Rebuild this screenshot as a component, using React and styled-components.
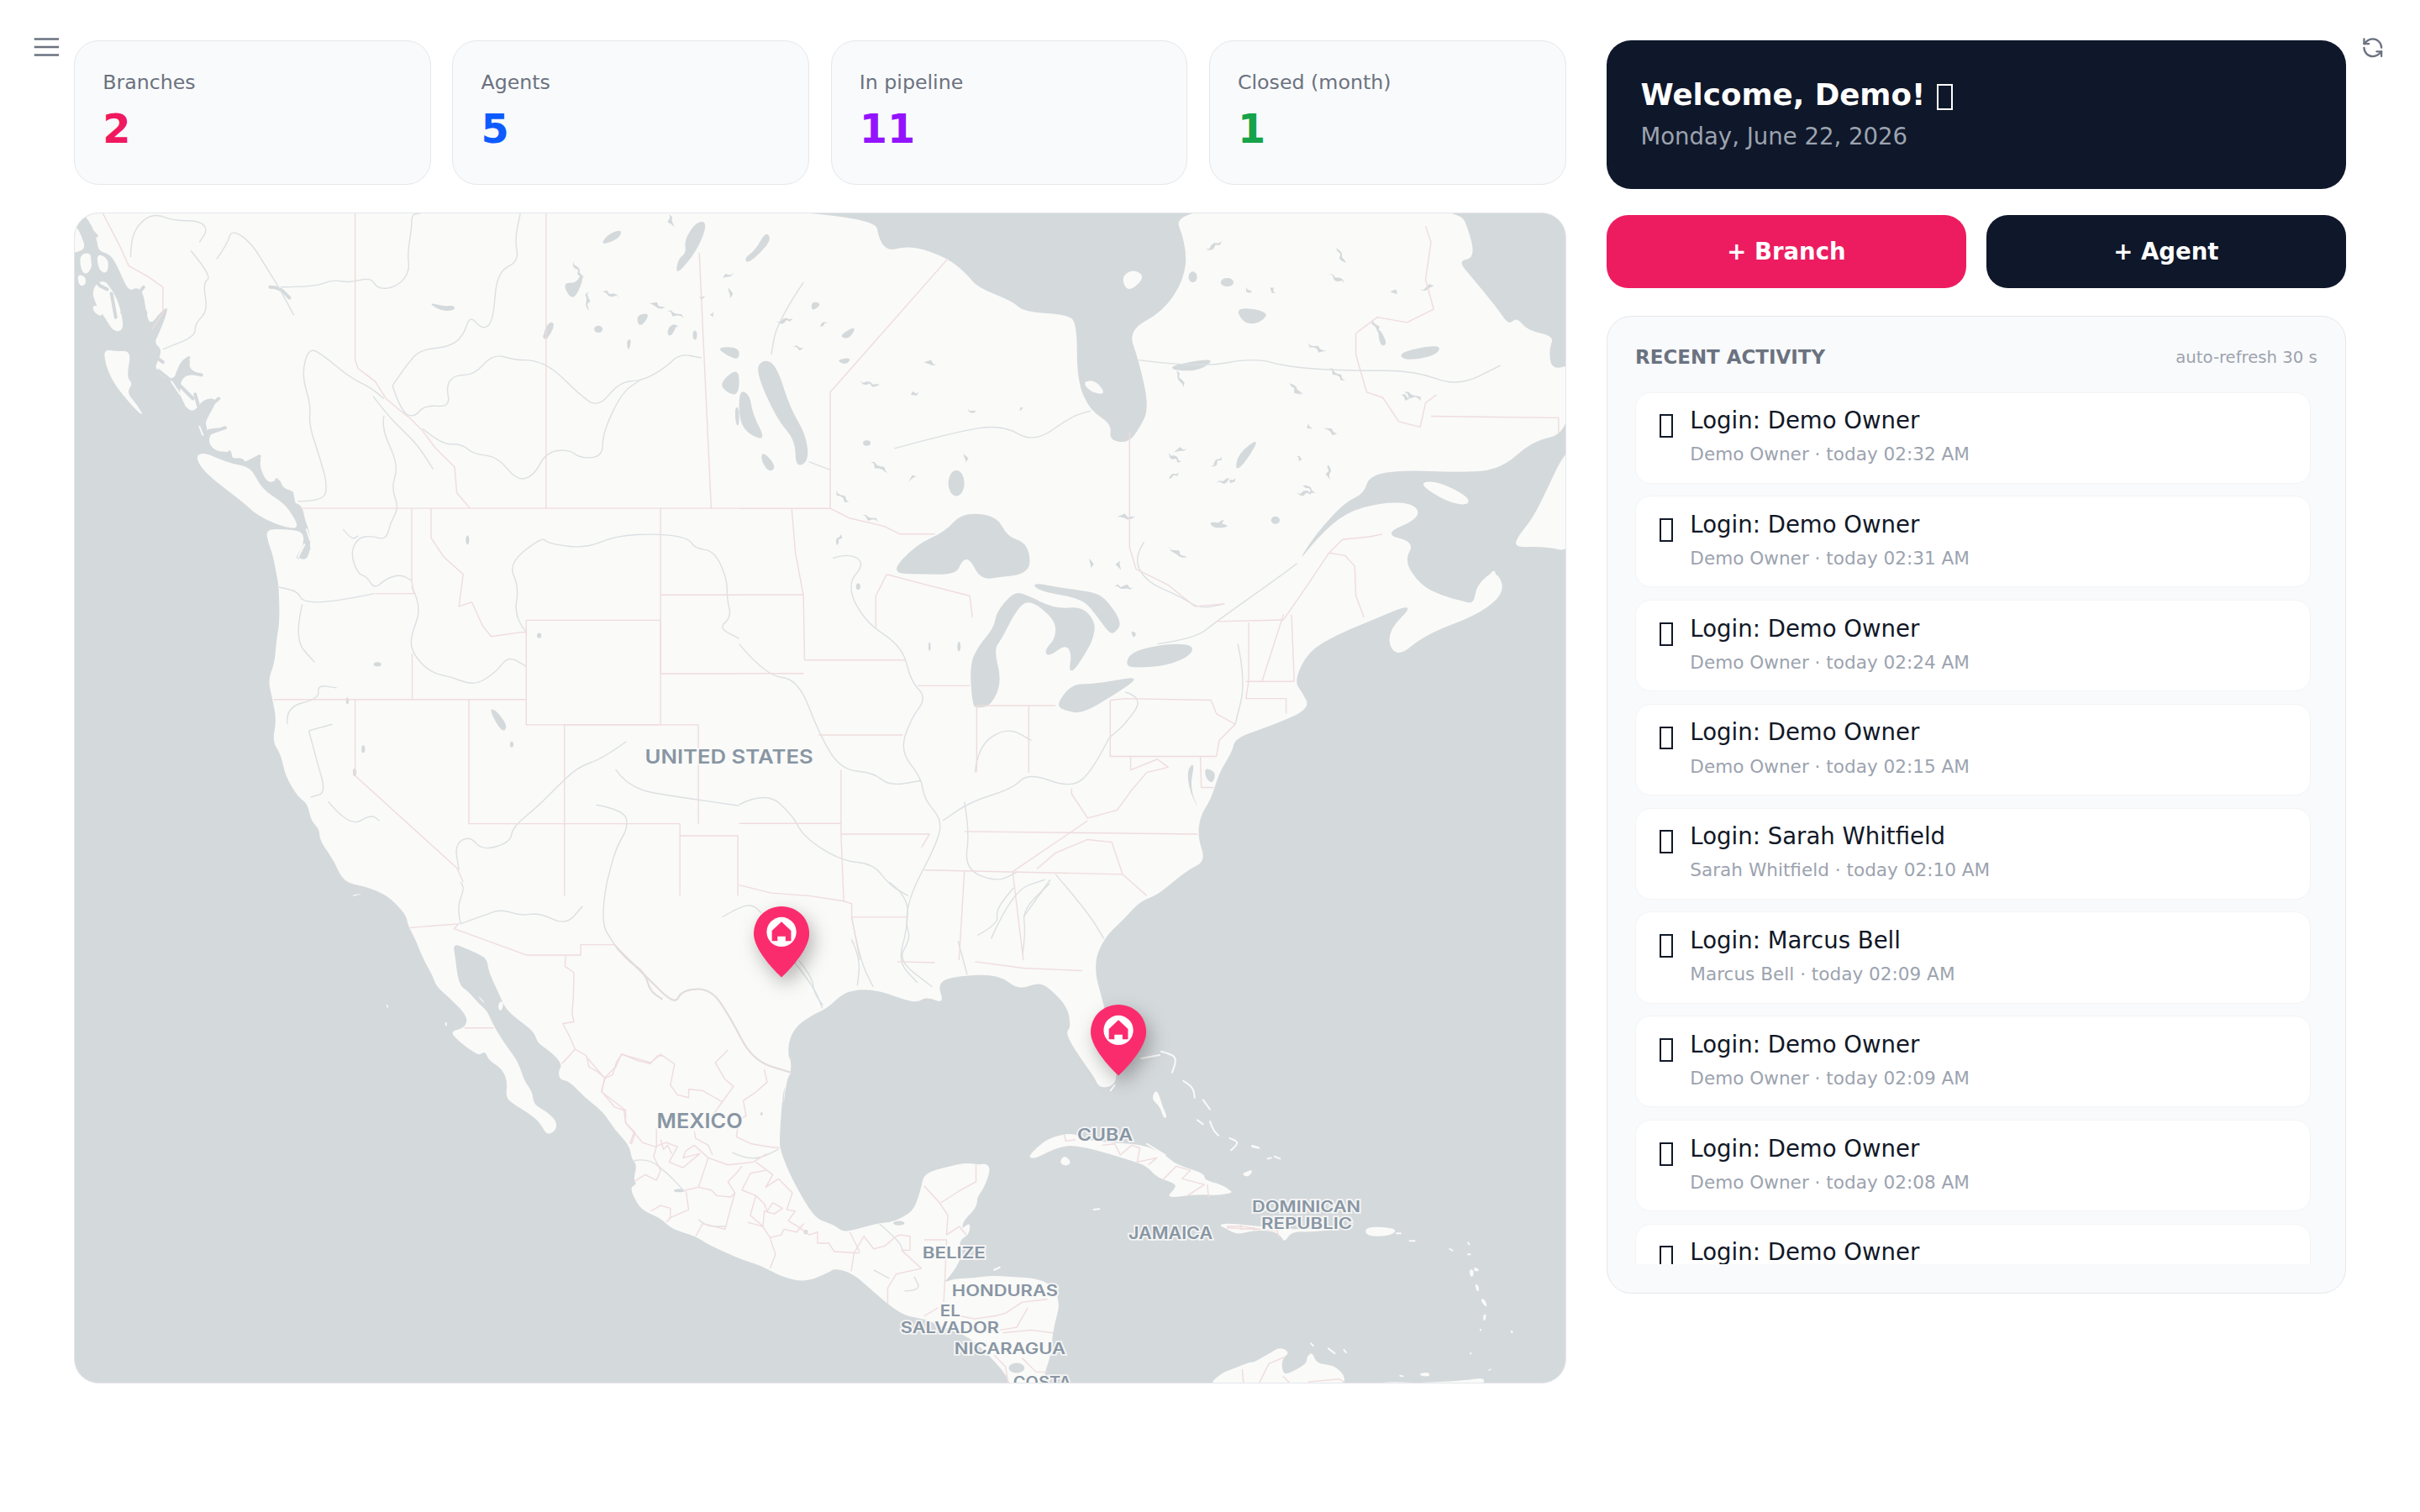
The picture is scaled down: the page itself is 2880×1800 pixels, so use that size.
import React from "react";
import styled, { createGlobalStyle } from "styled-components";
import { RefreshCcw } from "lucide-react";

const seg = (ox, oy, sx, sy) => (s) =>
  s.trim().split(/\s+/).map((p) => {
    const [x, y] = p.split(",").map(Number);
    return [ox + x / sx, oy + y / sy];
  });
const z7 = seg(80, 250, 1.96, 1.96);
const z8 = seg(880, 250, 1.568, 1.568);
const z9 = seg(89, 1050, 2.24, 2.613);
const z10 = seg(700, 1250, 3, 3);
const z11 = seg(1100, 1250, 3, 3);
const z12 = seg(1460, 1250, 3, 3);
const z3 = seg(860, 1050, 2.8, 3);
const pts = (a) => a.map((p) => p[0].toFixed(1) + "," + p[1].toFixed(1)).join(" ");
const f = (n) => n.toFixed(1);
const smoothClosed = (a) => {
  const n = a.length;
  const mid = (p, q) => [(p[0] + q[0]) / 2, (p[1] + q[1]) / 2];
  const s = mid(a[n - 1], a[0]);
  let d = `M${f(s[0])} ${f(s[1])}`;
  for (let i = 0; i < n; i++) {
    const m = mid(a[i], a[(i + 1) % n]);
    d += `Q${f(a[i][0])} ${f(a[i][1])} ${f(m[0])} ${f(m[1])}`;
  }
  return d + "Z";
};
const smoothOpen = (a) => {
  if (a.length < 3) return `M${f(a[0][0])} ${f(a[0][1])}L${f(a[a.length - 1][0])} ${f(a[a.length - 1][1])}`;
  let d = `M${f(a[0][0])} ${f(a[0][1])}`;
  for (let i = 1; i < a.length - 1; i++) {
    const mx = (a[i][0] + a[i + 1][0]) / 2;
    const my = (a[i][1] + a[i + 1][1]) / 2;
    d += `Q${f(a[i][0])} ${f(a[i][1])} ${f(mx)} ${f(my)}`;
  }
  const l = a[a.length - 1];
  return d + `L${f(l[0])} ${f(l[1])}`;
};
// A short stretch of small lakes: a jagged sliver between the two points.
const jag = (a, k) => {
  const [p, q] = [a[0], a[a.length - 1]];
  const dx = q[0] - p[0];
  const dy = q[1] - p[1];
  const len = Math.hypot(dx, dy) || 1;
  const nx = -dy / len;
  const ny = dx / len;
  const steps = Math.max(3, Math.round(len / 4));
  const top = [];
  const bottom = [];
  for (let i = 0; i <= steps; i++) {
    const t = i / steps;
    const h = Math.sin(t * Math.PI) * (1.2 + ((i * 7 + k * 3) % 5) * 0.55);
    const w = ((i * 5 + k) % 3) - 1;
    const x = p[0] + dx * t + nx * w * 1.4;
    const y = p[1] + dy * t + ny * w * 1.4;
    top.push([x + nx * h, y + ny * h]);
    bottom.unshift([x - nx * h * 0.6, y - ny * h * 0.6]);
  }
  return [...top, ...bottom];
};

const LAND = smoothClosed([
  ...z7(`10,-10 40,8 62,40 72,75 75,95 105,105 125,145 145,190 165,180 180,195 185,235 195,270 222,235 240,225 215,290 205,310 222,325 215,350 205,370 235,398 260,385 265,355 290,345 285,370 315,385 270,385 262,430 280,465 300,470 320,440 355,440 325,490 320,520 330,510 365,508 340,515 330,540 345,562 385,565 385,580 410,578 420,592 455,572 450,600 470,640 497,625 505,650 530,655 525,680 550,690 555,720 570,760 565,815 540,815 550,790 555,750 510,745 465,745 470,775 480,800 490,850 495,880 497,960 490,1000 485,1060 470,1095 480,1140 490,1190 480,1240 500,1270 510,1320 540,1370 562,1385 570,1425 590,1445 590,1470 625,1520 645,1568`),
  ...z9(`780,15 830,40 860,70 885,105 890,135 910,180 920,210 935,250 955,290 965,325 1005,365 1050,420 1040,455 1000,465 1030,500 1060,525 1080,540 1095,525 1105,555 1140,580 1155,620 1150,670 1170,690 1205,715 1240,745 1260,790 1285,770 1285,745 1265,720 1245,705 1225,690 1220,650 1200,620 1185,565 1165,530 1140,490 1115,440 1100,400 1080,380 1050,340 1025,320 1015,230 1010,190 1050,210 1080,225 1100,240 1105,280 1135,355 1150,395 1185,430 1225,465 1235,500 1260,520 1285,545 1300,570 1290,590 1295,615 1320,620 1360,670 1410,715 1440,770 1480,820 1485,860 1500,880 1490,925 1500,940 1480,950 1500,1000 1520,1025`),
  ...z10(`260,600 300,640 385,665 430,695 550,750 620,770 690,810 775,830 860,795 880,780 940,795 1000,845 1060,900 1130,950 1200,960`),
  ...z11(`60,985 150,1020 200,1060 250,1110 300,1170 320,1240 420,1240 430,1150 450,1100 460,1000 480,925 480,900 470,860 440,830 390,815 310,810 240,805 170,815 130,815 100,820 70,830 90,810 125,760 130,730 125,680 160,660 165,620 150,625 135,640 140,610 180,570 190,545 190,525 215,490 237,430 225,405 195,410 150,402 90,415 0,440`),
  ...z10(`1190,490 1165,570 1120,600 1080,615 1030,620 960,640 910,650 880,625 820,605 785,560 745,490 710,420 685,350 685,310 690,220 700,130 730,70 715,0`),
  ...z3(`200,830 215,700 232,680 215,590 240,520 300,475 350,450 400,400 445,385 500,385 555,400 605,420 650,430 680,410 740,435 715,360 780,335 920,330 985,385 1050,360 1085,375 1150,445 1160,520 1145,535 1160,575 1200,640 1240,700 1255,735 1300,730 1315,695 1300,560 1270,440 1235,300 1270,200 1340,130 1390,70 1450,45 1500,0`),
  ...z8(`840,1230 870,1215 855,1170 860,1130 880,1100 895,1050 920,1010 925,985 1000,960 1065,930 1050,900 1035,880 1060,825 1110,795 1170,770 1265,730 1205,790 1225,838 1280,792 1380,755 1430,712 1410,670 1375,700 1370,735 1350,730 1310,720 1270,700 1240,655 1260,620 1200,605 1270,575 1260,548 1200,545 1130,565 1080,610 1040,660 1075,605 1130,545 1165,530 1175,495 1240,485 1340,490 1420,485 1480,430 1545,418 1560,285 1515,300 1510,260 1520,235 1470,225 1450,200 1435,215 1415,185 1370,130 1340,95 1370,90 1365,50 1340,-10 805,-10 835,70 830,130 790,190 725,225 745,280 765,370 745,410 725,435 690,430 695,400 655,375 630,320 630,210 610,195 530,190 510,170 445,145 425,120 390,90 320,65 265,80 250,-10`),
]);

const LAND_BITS = [
  z7(`0,20 25,40 35,60 45,90 20,100 0,100`),
  z7(`88,325 115,330 152,328 140,390 155,405 140,425 165,455 180,480 165,470 130,430 105,395 90,355`),
  z7(`30,105 55,98 62,125 50,150 35,145`),
  z7(`70,100 100,115 95,150 75,140`),
  z7(`58,185 85,160 110,190 125,225 135,280 110,285 90,250 70,225`),
  z7(`25,150 45,155 45,175 30,178`),
  z7(`60,222 80,225 85,250 65,240`),
  z7(`300,575 320,566 350,578 385,592 430,600 455,650 500,680 520,700 545,745 500,738 445,712 415,685 370,650 320,610`),
  z8(`640,320 665,318 685,345 655,340`),
  z8(`712,125 735,110 758,125 725,155`),
  z8(`1265,510 1300,505 1360,535 1360,552 1320,545`),
  z8(`1447,630 1450,612 1480,575 1505,525 1535,460 1560,440 1560,640 1500,628`),
  z8(`1370,735 1385,700 1410,665 1412,700 1395,725`),
  z8(`1000,958 930,985 925,975 990,950`),
  z11(`370,382 405,345 450,312 530,295 570,320 650,330 740,335 800,345 860,375 900,410 1000,440 1000,465 1060,480 1100,505 1060,520 970,515 860,530 900,490 890,475 830,455 795,415 740,395 640,365 560,345 500,340 430,370 395,388`),
  z11(`490,385 505,378 525,400 510,415 485,405`),
  z11(`810,175 830,135 850,200 868,240 855,245 840,200`),
  z11(`1135,440 1175,425 1160,452 1140,450`),
  z11(`1010,1200 1060,1155 1095,1140 1200,1100 1200,1200`),
  z12(`-30,625 0,618 120,630 200,640 400,640 300,650 230,648 205,690 185,650 100,642 40,660 0,640`),
  z12(`-30,505 10,498 20,510 -10,515`),
  z12(`495,630 590,635 605,648 575,665 495,665`),
  z12(`0,1200 0,1165 60,1135 150,1085 190,1060 225,1080 195,1105 200,1160 230,1150 285,1120 285,1095 305,1078 320,1120 380,1125 420,1160 420,1200`),
  z12(`870,1075 875,1085 865,1090`),
  z12(`685,1155 720,1150 725,1165 695,1165`),
  z12(`500,1200 570,1183 690,1190 860,1178 920,1170 915,1200`),
  z12(`930,1142 950,1136 935,1146`),
  z12(`1010,998 1024,1008 1015,1014`),
  z12(`865,782 880,785 880,808 868,810`),
  z12(`882,772 905,788 882,792`),
  z12(`885,835 898,840 900,862 890,860`),
  z12(`905,888 920,890 930,918 915,912`),
  z12(`915,945 926,942 922,968 914,965`),
  z12(`900,996 910,996 906,1008`),
  z9(`950,75 972,90 965,100`),
  z9(`830,378 838,385 836,395`),
  z9(`988,432 996,440 990,452`),
  z9(`740,40 772,35 745,45`),
  z9(`1075,350 1098,380 1085,370`),
  z9(`1132,372 1145,372 1140,400 1130,398`),
];

const BAHAMA = [
  z11(`925,110 960,130 965,170`),
  z11(`995,178 1020,212`),
  z11(`975,250 995,265`),
  z11(`1020,255 1030,285 1050,305`),
  z11(`1090,315 1118,325 1115,340 1095,358`),
  z11(`1170,345 1195,350`),
  z11(`775,30 800,25 840,18`),
  z11(`845,5 885,15 900,35 885,80`),
  z11(`665,145 680,125`),
  z11(`605,570 625,568`),
  z11(`795,335 860,375`),
  z11(`250,785 270,776`),
  z12(`145,388 158,385`),
  z12(`170,380 190,388`),
  z12(`90,342 112,348`),
  z12(`605,655 620,655`),
  z12(`652,682 670,682`),
  z12(`795,710 805,716`),
  z12(`860,688 865,694`),
  z12(`860,730 868,730`),
  z12(`300,1048 308,1056`),
  z12(`362,1066 385,1083`),
  z12(`418,1070 425,1080`),
  z12(`618,1163 628,1165`),
];

const LAKES = [
  z8(`280,678 330,625 385,600 415,565 480,570 500,610 535,620 545,660 530,680 490,685 450,690 430,650 415,655 405,680 340,680`),
  z8(`435,925 430,850 445,815 475,780 480,750 510,715 530,715 590,745 640,740 665,770 660,800 650,820 625,860 615,860 620,830 610,810 575,835 570,820 590,800 590,765 540,725 515,750 490,800 475,820 490,880 470,925 445,930`),
  z8(`545,695 600,705 650,712 680,720 715,770 700,790 690,790 665,755 640,725 560,712`),
  z8(`590,925 620,885 655,885 690,880 750,870 700,905 640,940 610,935`),
  z8(`720,850 730,825 790,810 845,810 845,830 800,850 740,855`),
  z8(`30,300 45,278 70,290 95,370 125,420 130,470 105,480 105,430 70,390`),
  z8(`45,450 70,480 55,490 40,465`),
  z8(`0,335 20,345 25,380 50,430 20,420 0,395`),
  z8(`868,1040 890,1050 882,1072 870,1060`),
  z8(`835,1045 850,1030 840,1080 860,1125 840,1085`),
  z8(`730,785 742,790 735,800`),
  z8(`10,90 30,75 50,40 60,55 40,80 15,100`),
  z8(`135,170 155,175 135,190`),
  z8(`180,280 210,275 200,290`),
  z8(`185,235 220,215 205,242`),
  z8(`925,180 990,190 970,212 940,212`),
  z8(`805,290 890,275 860,300 810,300`),
  z8(`930,455 972,423 945,470 925,488`),
  z8(`1230,265 1310,250 1300,272 1240,282`),
  z8(`1190,215 1210,250 1195,255`),
  z8(`875,580 920,590 885,595`),
  z8(`1340,640 1370,630 1355,650`),
  z7(`1248,75 1265,55 1295,45 1290,65 1255,80`),
  z7(`1440,70 1470,25 1495,30 1470,95 1420,155 1425,115 1445,100`),
  z7(`1155,170 1190,170 1200,145 1205,165 1180,215`),
  z7(`1330,245 1360,240 1345,268 1332,268`),
  z7(`843,215 880,225 905,222 905,235 870,235`),
  z7(`985,1165 1000,1165 1030,1205 1015,1220`),
  z7(`1110,290 1125,260 1140,265 1122,302`),
  z7(`1405,270 1425,265 1410,295 1400,290`),
  z7(`1305,305 1318,300 1310,332`),
  z7(`1515,320 1568,320 1568,350 1540,340`),
  z7(`1520,405 1568,365 1568,430 1545,430`),
  z7(`1558,460 1568,460 1568,505 1560,500`),
  z10(`305,498 345,495 345,508 310,508`),
];

const LAKE_DOTS = [
  [z8, 405, 510, 15, 24],
  [z8, 1000, 579, 8, 7],
  [z8, 910, 135, 12, 8],
  [z8, 222, 703, 4, 6],
  [z8, 410, 815, 3, 9],
  [z8, 355, 815, 2, 8],
  [z8, 238, 435, 7, 5],
  [z8, 846, 125, 8, 10],
  [z7, 935, 770, 4, 11],
  [z7, 725, 1060, 9, 5],
  [z7, 655, 1145, 3, 8],
  [z7, 692, 1258, 4, 9],
  [z7, 672, 1312, 4, 9],
  [z7, 1038, 1247, 4, 7],
  [z7, 1117, 295, 6, 6],
  [z7, 1240, 278, 10, 8],
  [z7, 1465, 292, 5, 11],
  [z7, 1102, 993, 5, 6],
  [z10, 620, 228, 4, 6],
  [z10, 778, 650, 7, 8],
  [z10, 1110, 618, 20, 8],
  [z11, 330, 1135, 28, 18],
];

const THIN_WATER = [
  z8(`870,75 900,58`), z8(`1100,120 1130,135`), z8(`1115,70 1130,100`), z8(`945,145 955,155`), z8(`990,145 1000,155`),
  z8(`1215,150 1228,155`), z8(`1270,150 1295,140`), z8(`815,300 830,330`), z8(`810,450 835,445`), z8(`1035,330 1050,345`),
  z8(`1235,345 1250,352`), z8(`1260,345 1272,355`), z8(`1060,400 1068,410`), z8(`1040,460 1050,465`), z8(`1100,475 1100,505`),
  z8(`1040,530 1070,525`), z8(`880,590 905,580`), z8(`800,500 820,490`), z8(`880,480 900,460`), z8(`915,510 925,500`),
  z8(`705,570 738,575`), z8(`800,630 835,650`), z8(`700,702 735,705`), z8(`655,650 658,668`), z8(`708,655 710,672`),
  z8(`245,470 280,490`), z8(`315,505 330,495`), z8(`180,525 205,545`), z8(`230,570 260,580`), z8(`180,625 190,605`),
  z8(`70,210 100,202`), z8(`100,255 120,258`), z8(`150,215 165,210`), z8(`225,320 262,328`), z8(`320,345 335,340`),
  z8(`345,282 368,288`), z8(`425,372 442,378`), z8(`525,368 527,375`), z8(`420,455 425,470`),
  z8(`1180,205 1200,235`), z8(`1240,340 1265,350`), z8(`1090,405 1115,418`), z8(`1060,250 1095,265`),
  z8(`1100,295 1130,318`), z8(`1028,322 1048,348`), z8(`800,455 825,470`), z8(`890,510 915,502`), z8(`1052,512 1075,528`),
  z7(`1180,120 1205,160`), z7(`1250,190 1290,203`), z7(`1360,215 1395,230`), z7(`1400,285 1425,268`), z7(`1530,158 1555,147`),
  z7(`1545,180 1550,205`), z7(`1215,190 1215,235`), z7(`1405,10 1415,40`), z7(`1490,203 1475,205`), z7(`1500,245 1510,240`),
  z7(`1400,235 1440,250`),
];
const FJORDS = [
  z7(`35,15 55,45 70,60`), z7(`60,100 65,170 95,185`), z7(`110,130 125,165 140,215`), z7(`150,235 160,205 180,180`),
  z7(`165,240 185,265`), z7(`130,180 150,200 130,240`), z7(`105,195 115,250`), z7(`185,240 170,215`),
  z7(`255,395 265,360 285,345`), z7(`290,380 315,385`), z7(`265,410 295,440`), z7(`255,420 272,455`), z7(`300,430 310,465`),
  z7(`320,470 355,440`), z7(`320,490 325,520`), z7(`335,520 370,508`), z7(`380,565 385,585`), z7(`420,590 450,575`),
  z7(`490,630 500,660`), z7(`525,660 530,685`), z7(`545,710 555,745`), z7(`555,740 565,790`), z7(`540,810 565,770`),
  z7(`475,180 495,180 520,205`), z7(`205,340 225,355`), z7(`215,375 240,395`),
];
const WHITE_SLIVERS = [
  z7(`560,745 568,770`), z7(`540,810 555,780`), z7(`245,400 265,430`), z7(`310,505 318,525`),
];

const BORDERS = [
  z7(`545,696 1568,696`),
  z8(`0,557 170,557`),
  z7(`673,8 673,350 680,370 700,385 720,400 745,440 780,470 800,485 830,515 860,555 880,575 905,600 910,660 940,695`),
  z7(`1118,8 1118,696`),
  z7(`1475,100 1503,696`),
  z7(`805,696 805,865 810,895 720,895`),
  z7(`806,1035 806,1142`),
  z7(`483,1142 1072,1142`),
  z7(`850,696 850,765 880,810 925,850 915,925 945,915 970,970 990,995 1060,985 1072,985`),
  z7(`1072,957 1385,957 1385,1201 1072,1201 1072,957`),
  z7(`1385,696 1385,1082 1568,1082`),
  z7(`1385,898 1568,898`),
  z7(`673,1142 673,1320 910,1535 925,1568`),
  z7(`938,1142 938,1432 1430,1432`),
  z7(`1161,1201 1161,1600`),
  z7(`1161,1201 1473,1201 1473,1432`),
  z7(`1430,1432 1430,1600`),
  z7(`1430,1460 1565,1460 1565,1600`),
  z8(`0,718 120,718`),
  z8(`98,557 105,640 120,720 122,840 310,840`),
  z8(`0,865 120,865`),
  z8(`148,980 305,980`),
  z8(`0,1145 190,1145`),
  z8(`190,1045 190,1165 195,1290 210,1295 210,1320 315,1320`),
  z8(`190,1165 355,1165 340,1190`),
  z8(`0,1260 60,1275 130,1280 195,1290`),
  z8(`210,1320 225,1400`),
  z8(`275,680 350,700 430,720 435,760`),
  z8(`275,680 255,720 255,780`),
  z8(`333,888 430,888`),
  z8(`443,925 443,1050`),
  z8(`443,925 590,925`),
  z8(`540,925 540,1050`),
  z8(`692,915 692,1020 890,1020`),
  z8(`692,915 720,912 880,915 890,940 925,960 895,990 890,1020`),
  z8(`730,1020 730,1045 780,1025 800,1040 760,1050 730,1085 705,1120 650,1135 620,1090 620,1080`),
  z8(`860,1020 862,1078 885,1078`),
  z8(`420,1160 855,1165`),
  z8(`345,1232 715,1240 760,1280`),
  z8(`420,1235 410,1400`),
  z8(`510,1235 530,1400`),
  z8(`440,1403 530,1415 640,1420`),
  z8(`295,1403 365,1405`),
  z8(`555,1230 590,1200 650,1175 695,1180 715,1240`),
  z8(`510,1235 650,1140`),
  z8(`950,770 950,880 945,912`),
  z8(`1015,755 975,880`),
  z8(`1030,755 1035,880`),
  z8(`945,880 1035,880`),
  z8(`945,912 1020,912 1020,940`),
  z8(`890,768 1015,765 1060,700 1100,640 1130,645 1148,665 1150,720 1165,760`),
  z8(`728,415 728,630 740,670 800,700 850,740 905,735`),
  z8(`170,340 170,557 205,575 270,590 300,605 365,605`),
  z8(`390,90 170,340`),
  z8(`1290,385 1528,388 1528,418`),
  z8(`1280,30 1290,60 1280,130 1295,185 1245,210 1190,200 1150,230 1150,270 1170,340 1200,350 1230,395 1270,405 1280,360 1300,345`),
  z8(`1100,640 1125,615 1175,610 1200,605`),
  z7(`85,8 125,85 145,130 190,155 225,180 225,240 200,278`),
  z9(`895,142 1025,130 1013,145 1205,227 1350,227 1350,195 1440,195`),
  z9(`1040,454 1118,454`),
  z9(`1310,228 1308,262 1332,282 1330,360 1327,410 1332,435 1302,440 1320,480 1335,520 1300,565`),
  z9(`1335,520 1365,540 1372,575 1395,590 1415,610 1405,650 1440,700 1465,710 1470,750 1495,780 1485,815`),
  z9(`1415,610 1435,600 1445,560 1460,535 1500,555 1535,565 1555,540 1568,540`),
  z10(`0,30 60,100 100,60 120,15 225,45 260,15 310,50 295,125 320,160 360,170 360,140 410,145 480,185 520,130 490,105 455,45 500,0`),
  z10(`60,100 50,150 135,215 135,260 165,295 150,335`),
  z10(`165,295 195,330 240,345 280,330 320,345 290,400 340,420 400,370 340,385 350,360 380,340 430,385 500,410 550,405 590,400 640,370`),
  z10(`480,185 440,240`),
  z10(`245,280 245,345 235,380 260,430 245,465 205,445 165,470`),
  z10(`260,320 270,355 285,340 300,370`),
  z10(`380,290 385,315 430,340 445,375`),
  z10(`430,385 395,490 440,500 460,520 510,525 525,510 500,470 530,440 550,415`),
  z10(`555,180 565,235 540,250 530,310 585,335 640,345 685,350`),
  z10(`555,180 600,150 640,115 630,70`),
  z10(`525,510 500,600 490,640 410,620 385,665`),
  z10(`395,490 350,500 360,570 290,600`),
  z10(`225,575 260,555 295,565 295,600 280,615`),
  z10(`600,400 640,430 660,445 635,490 680,460 730,510 710,570 740,575 715,610 750,630 790,660 820,650 820,690 860,690 880,720 970,725`),
  z10(`550,500 580,440 635,430`),
  z10(`550,500 600,520 630,550 640,575 660,545 695,565 665,585 630,575 625,630 570,615`),
  z10(`600,520 580,590 625,630 650,670 690,660 700,640 745,650 770,620`),
  z10(`650,670 670,730 650,780`),
  z10(`940,790 950,725 985,665 1020,710 1060,700 1100,665 1115,660 1150,665 1150,715 1120,715 1190,780 1100,800 1070,850 1070,910`),
  z10(`970,720 935,650`),
  z11(`0,485 55,545 85,590 80,660 125,630 150,660`),
  z11(`60,545 130,500 185,470 185,410`),
  z11(`0,678 80,678 75,800 70,900`),
  z11(`0,950 50,920`),
  z11(`130,950 180,960 250,950 290,940 350,900 440,890`),
  z11(`270,1000 330,990 370,920`),
  z11(`280,1010 380,1000 460,1010`),
  z11(`250,1090 290,1130 300,1190`),
  z11(`350,1100 400,1150 440,1150`),
  z11(`500,300 505,325 540,320`),
  z11(`635,340 680,335 700,375 740,340 770,350 760,400 830,385 800,410`),
  z11(`850,465 900,415 950,430 920,460 1000,480 940,520`),
  z11(`1010,480 1015,525`),
  z11(`1080,630 1140,630 1200,640`),
  z12(`0,635 100,640 180,645 185,670`),
  z12(`50,625 50,640 95,635 100,650`),
  z12(`55,1140 60,1200`),
  z12(`110,1200 150,1120 210,1095`),
  z12(`200,1165 235,1200`),
  z12(`290,1185 400,1175 420,1185`),
];

const RIVERS = [
  z7(`150,110 150,70 170,30 205,8 250,25 310,25 330,45 310,75`),
  z7(`290,95 340,155 318,170 330,235 300,265 300,295 225,325`),
  z7(`350,115 375,80 385,45 430,75 470,140 495,180 530,245`),
  z7(`500,180 580,180 620,162 660,170 710,157 725,185 770,180 800,145 795,100 805,40 805,10 825,8`),
  z7(`715,435 750,480 780,510 820,550 855,605`),
  z7(`540,680 600,680 608,640 590,575 565,500 570,455 548,385 565,320 600,340 660,390 710,415 740,440`),
  z7(`740,480 735,510 765,575 770,610 758,650 775,695 755,730 745,770 710,760 680,765 662,800 680,850 700,855 718,885 745,860 780,850 805,865`),
  z7(`718,895 620,915 550,915 540,890 495,880`),
  z7(`760,410 800,350 830,325 890,320 925,295 940,245 970,280 995,260 1003,145 1055,120 1045,70 1058,8`),
  z7(`760,410 780,470 810,485 835,455 895,460 885,410 905,385 950,385 995,335 1045,350 1090,350 1135,370 1195,430 1240,462 1290,400 1345,398 1400,365 1430,335 1480,345`),
  z7(`830,510 875,548 920,545 950,570 1005,575 1050,632 1090,620 1118,565 1170,558 1200,580 1250,575 1250,520 1295,425 1340,395`),
  z7(`1072,985 1043,950 1055,880 1030,825 1110,762 1120,778 1210,790 1280,760 1380,755 1450,765 1465,790 1510,795 1540,860 1540,910 1550,950 1520,975 1568,1000`),
  z7(`805,880 830,925 800,1000 810,1040 850,1080 900,1090 950,1110 1000,1080 1030,1040 1072,1065`),
  z7(`550,920 530,1000 578,1055`),
  z7(`645,745 665,770 680,760`),
  z7(`565,1215 585,1290 605,1360 570,1370`),
  z7(`515,1200 510,1160 590,1140 585,1108 630,1115`),
  z7(`620,1200 565,1215`),
  z7(`610,1380 660,1440 710,1410 730,1425`),
  z7(`1305,1240 1250,1280 1190,1300 1130,1360 1095,1395 1040,1440 1035,1475 970,1495 940,1460 905,1480 915,1540`),
  z7(`1280,1305 1310,1350 1430,1370 1568,1390`),
  z7(`1235,1388 1300,1400 1310,1440 1280,1490 1260,1568`),
  z8(`0,810 50,870 110,875 150,980 190,1045 250,1050 280,1075 340,1065`),
  z8(`0,1110 50,1085 100,1130 120,1170 190,1215 250,1220 280,1260 315,1280`),
  z8(`175,650 205,640 235,660 200,700 235,770 305,815 320,880 350,910 320,950 300,1010 340,1060 345,1100 380,1140 365,1190 320,1275 310,1330 320,1360 295,1400 360,1450`),
  z8(`690,985 660,1045 620,1080 540,1050 510,1080 430,1105 380,1140`),
  z8(`420,1105 430,1160 420,1230 480,1255 520,1235`),
  z8(`440,1050 445,1000 500,965 545,990`),
  z8(`780,810 850,800 890,768 1000,690 1040,660`),
  z8(`745,280 860,295 960,275 1030,295 1150,300 1260,300 1340,330 1420,290`),
  z8(`755,620 735,650 760,695 820,720 860,745 905,735`),
  z8(`290,445 400,415 490,400 550,435 620,385 655,375`),
  z8(`170,485 130,470`),
  z8(`120,135 70,210 60,270`),
  z8(`470,1360 510,1270 570,1250`),
  z8(`530,1320 580,1250`),
  z8(`590,1240 650,1310 680,1360`),
  z8(`210,1320 225,1400 250,1450`),
  z8(`100,1400 140,1450 155,1490`),
  z8(`930,810 945,880 925,960`),
  z8(`720,900 755,910 720,960 690,985`),
  z9(`1030,130 1020,80 1040,20 1030,0`),
  z9(`1030,130 1100,100 1140,85 1190,105 1240,95 1310,135 1355,75`),
  z9(`1420,0 1400,120 1440,195`),
  z3(`0,125 55,90 100,80 130,110`),
  z3(`255,280 300,340 305,395 335,440`),
  z3(`430,205 460,270 450,370`),
  z3(`555,0 620,50 615,170 585,285 650,360`),
  z3(`785,210 815,330`),
  z3(`850,190 920,150 910,100 970,20`),
  z3(`1000,260 1010,180 1000,100 1090,5`),
  z10(`515,365 585,400 680,355`),
  z10(`165,395 215,385 290,445 345,505`),
  z10(`395,605 420,630 490,630`),
  z10(`1040,620 1110,680 1125,720`),
  z10(`1020,785 1075,815`),
  z10(`1130,860 1190,860 1165,810`),
];

const RIO = z9(`1440,195 1470,240 1520,280 1535,340 1568,365`);
const RIO3 = seg(700, 1050, 1.3, 2.49)(`45,195 90,280 135,365 145,320 190,315 220,400 255,530 315,565`);

const LABELS = [
  ["UNITED STATES", 768, 968, 909, 23],
  ["MEXICO", 782, 884, 1343, 24],
  ["CUBA", 1282, 1348, 1358, 20],
  ["JAMAICA", 1343, 1443, 1475, 20],
  ["BELIZE", 1098, 1173, 1498, 18],
  ["HONDURAS", 1133, 1259, 1543, 18],
  ["EL", 1119, 1143, 1567, 18],
  ["SALVADOR", 1072, 1189, 1587, 18],
  ["NICARAGUA", 1136, 1268, 1612, 18],
  ["COSTA", 1206, 1275, 1652, 18],
  ["DOMINICAN", 1490, 1619, 1443, 18],
  ["REPUBLIC", 1501, 1609, 1463, 18],
];

const STATS = [
  ["Branches", "2", "#f0185f"],
  ["Agents", "5", "#0d5bff"],
  ["In pipeline", "11", "#9313ff"],
  ["Closed (month)", "1", "#16a34a"],
];

const ACTIVITY = [
  ["Demo Owner", "today 02:32 AM"],
  ["Demo Owner", "today 02:31 AM"],
  ["Demo Owner", "today 02:24 AM"],
  ["Demo Owner", "today 02:15 AM"],
  ["Sarah Whitfield", "today 02:10 AM"],
  ["Marcus Bell", "today 02:09 AM"],
  ["Demo Owner", "today 02:09 AM"],
  ["Demo Owner", "today 02:08 AM"],
  ["Demo Owner", "today 02:07 AM"],
];

const GlobalStyle = createGlobalStyle`
  html, body { margin: 0; padding: 0; background: #fff; }
  body { font-family: "DejaVu Sans", sans-serif; }
  * { box-sizing: border-box; }
`;

const Page = styled.div`
  zoom: 1.83673;
  position: relative;
  width: 1568px;
  height: 980px;
  padding: 26.4px 48px 0;
  display: flex;
  gap: 26.4px;
  overflow: hidden;
`;
const MenuButton = styled.svg`
  position: absolute;
  left: 22px;
  top: 24.6px;
  width: 17px;
  height: 12px;
  color: #6b7280;
`;
const RefreshButton = styled(RefreshCcw)`
  position: absolute;
  left: 1530px;
  top: 23.5px;
  width: 15px;
  height: 15px;
  color: #6b7280;
`;
const LeftColumn = styled.main`
  flex: 0 0 966.6px;
  display: flex;
  flex-direction: column;
  gap: 18px;
`;
const StatRow = styled.section`
  display: grid;
  grid-template-columns: repeat(4, 1fr);
  gap: 14px;
`;
const StatCard = styled.div`
  height: 93.5px;
  padding: 18px 18px 0;
  background: #f9fafb;
  border: 1px solid #e5e7eb;
  border-radius: 16px;
`;
const StatLabel = styled.div`
  font-size: 12.9px;
  line-height: 17px;
  color: #6b7280;
`;
const StatValue = styled.div`
  margin-top: 6px;
  font-size: 26px;
  line-height: 32px;
  font-weight: 700;
  color: ${(p) => p.$color};
`;
const MapFrame = styled.section`
  position: relative;
  height: 759px;
  border: 1px solid #e5e7eb;
  border-radius: 16px;
  overflow: hidden;
  background: #d4d9dc;
`;
const MapSvg = styled.svg`
  display: block;
  width: 100%;
  height: 100%;
`;
const Pin = styled.svg`
  position: absolute;
  left: ${(p) => p.$x}px;
  top: ${(p) => p.$y}px;
  width: 36px;
  height: 46px;
  overflow: visible;
  filter: drop-shadow(3px 5px 6px rgba(0, 0, 0, 0.28));
`;
const RightColumn = styled.aside`
  flex: 0 0 479px;
  display: flex;
  flex-direction: column;
`;
const WelcomeCard = styled.div`
  height: 96px;
  padding: 22px 22px 0;
  background: #0f172a;
  border-radius: 16px;
`;
const WelcomeTitle = styled.div`
  font-size: 19.4px;
  line-height: 26px;
  font-weight: 700;
  color: #fff;
`;
const WelcomeDate = styled.div`
  margin-top: 4px;
  font-size: 15px;
  line-height: 20px;
  color: #9ca3af;
`;
const TitleTofu = styled.span`
  display: inline-block;
  width: 10.4px;
  height: 17px;
  margin-left: 0.5px;
  vertical-align: -3.5px;
  border: 1.2px solid #fff;
`;
const ButtonRow = styled.div`
  margin-top: 17px;
  display: grid;
  grid-template-columns: 1fr 1fr;
  gap: 13px;
`;
const ActionButton = styled.button`
  height: 47.6px;
  padding: 0 0 1px;
  border: 0;
  border-radius: 14px;
  font-family: inherit;
  font-size: 15px;
  font-weight: 700;
  color: #fff;
  background: ${(p) => (p.$pink ? "#ed1c61" : "#0f172a")};
`;
const ActivityPanel = styled.section`
  margin-top: 18px;
  padding: 18px 18px 18.5px;
  background: #f9fafb;
  border: 1px solid #e5e7eb;
  border-radius: 16px;
`;
const PanelHead = styled.div`
  display: flex;
  align-items: center;
  justify-content: space-between;
  height: 13px;
  margin-top: 1.5px;
  margin-bottom: 16px;
`;
const PanelTitle = styled.div`
  font-size: 12.5px;
  font-weight: 700;
  color: #6b7280;
`;
const PanelHint = styled.div`
  font-size: 10.7px;
  color: #9ca3af;
`;
const ActivityList = styled.div`
  height: 565.5px;
  padding-right: 4.5px;
  overflow: hidden;
  display: flex;
  flex-direction: column;
  gap: 8px;
`;
const ActivityItem = styled.div`
  flex: 0 0 59.4px;
  display: flex;
  gap: 11.3px;
  padding: 8.5px 13px 0 15px;
  background: #fff;
  border: 1px solid #f3f4f6;
  border-radius: 10px;
`;
const ActivityTofu = styled.span`
  flex: 0 0 8.7px;
  height: 15.2px;
  margin-top: 5.5px;
  border: 1.1px solid #111827;
`;
const ActivityBody = styled.div`
  display: flex;
  flex-direction: column;
`;
const ActivityTitle = styled.div`
  font-size: 15px;
  line-height: 19px;
  color: #111827;
`;
const ActivityMeta = styled.div`
  margin-top: 4.5px;
  font-size: 11.75px;
  line-height: 16px;
  color: #9ca3af;
`;

function PinMark({ x, y }) {
  return (
    <Pin $x={x} $y={y} viewBox="0 0 36 46">
      <path
        d="M18 0C8 0 0 7.6 0 17.8 0 26 9 37.5 18 46 27 37.5 36 26 36 17.8 36 7.6 28 0 18 0Z"
        fill="#fb2c6e"
      />
      <circle cx="18" cy="16.6" r="9.6" fill="#fff" />
      <path d="M18 10 11.8 15.8V22.4H15.4V19.4H20.6V22.4H24.2V15.8Z" fill="#fb2c6e" />
    </Pin>
  );
}

function NorthAmerica() {
  const water = "#d4d9dc";
  const land = "#fafaf8";
  return (
    <MapSvg viewBox="90 254 1772 1392" preserveAspectRatio="none">
      <path d={LAND} fill={land} />
      {LAND_BITS.map((p, i) => (
        <path key={i} d={smoothClosed(p)} fill={land} />
      ))}
      {FJORDS.map((p, i) => (
        <path key={i} d={smoothOpen(p)} fill="none" stroke={water} strokeWidth="4" strokeLinecap="round" />
      ))}
      {WHITE_SLIVERS.map((p, i) => (
        <polyline key={i} points={pts(p)} fill="none" stroke={land} strokeWidth="2" strokeLinecap="round" />
      ))}
      {BAHAMA.map((p, i) => (
        <path key={i} d={smoothOpen(p)} fill="none" stroke={land} strokeWidth="2" strokeLinecap="round" />
      ))}
      {LAKES.map((p, i) => (
        <path key={i} d={smoothClosed(p)} fill={water} />
      ))}
      {LAKE_DOTS.map(([z, x, y, rx, ry], i) => {
        const [[cx, cy]] = z(`${x},${y}`);
        const [[ex, ey]] = z(`${x + rx},${y + ry}`);
        return <ellipse key={i} cx={cx} cy={cy} rx={ex - cx} ry={ey - cy} fill={water} />;
      })}
      {THIN_WATER.map((p, i) => (
        <polygon key={i} points={pts(jag(p, i))} fill={water} />
      ))}
      {RIVERS.map((p, i) => (
        <path key={i} d={smoothOpen(p)} fill="none" stroke="#dbe0e3" strokeWidth="1.4" strokeLinejoin="round" />
      ))}
      {BORDERS.map((p, i) => (
        <polyline key={i} points={pts(p)} fill="none" stroke="#efdcde" strokeWidth="1.4" strokeLinejoin="round" />
      ))}
      <path d={smoothOpen(RIO)} fill="none" stroke="#e3dcdc" strokeWidth="2.2" />
      <path d={smoothOpen(RIO3)} fill="none" stroke="#e3dcdc" strokeWidth="2.2" />
      {LABELS.map(([t, x1, x2, y, size]) => (
        <text
          key={t}
          x={x1}
          y={y}
          textLength={x2 - x1}
          lengthAdjust="spacingAndGlyphs"
          fontFamily="Inter, sans-serif"
          fontSize={size}
          fontWeight="600"
          fill="#8896a4"
          stroke={land}
          strokeWidth="3.5"
          strokeOpacity="0.85"
          paintOrder="stroke"
        >
          {t}
        </text>
      ))}
    </MapSvg>
  );
}

export default function App() {
  return (
    <>
      <GlobalStyle />
      <Page>
        <MenuButton viewBox="0 0 17 12" fill="none" stroke="currentColor" strokeWidth="1.4">
          <path d="M.4 .8H16.4M.4 6H16.4M.4 11.2H16.4" />
        </MenuButton>
        <RefreshButton strokeWidth={2} />
        <LeftColumn>
          <StatRow>
            {STATS.map(([label, value, color]) => (
              <StatCard key={label}>
                <StatLabel>{label}</StatLabel>
                <StatValue $color={color}>{value}</StatValue>
              </StatCard>
            ))}
          </StatRow>
          <MapFrame>
            <NorthAmerica />
            <PinMark x={440} y={449} />
            <PinMark x={658} y={512.5} />
          </MapFrame>
        </LeftColumn>
        <RightColumn>
          <WelcomeCard>
            <WelcomeTitle>
              Welcome, Demo! <TitleTofu />
            </WelcomeTitle>
            <WelcomeDate>Monday, June 22, 2026</WelcomeDate>
          </WelcomeCard>
          <ButtonRow>
            <ActionButton $pink>+ Branch</ActionButton>
            <ActionButton>+ Agent</ActionButton>
          </ButtonRow>
          <ActivityPanel>
            <PanelHead>
              <PanelTitle>RECENT ACTIVITY</PanelTitle>
              <PanelHint>auto-refresh 30 s</PanelHint>
            </PanelHead>
            <ActivityList>
              {ACTIVITY.map(([who, when], i) => (
                <ActivityItem key={i}>
                  <ActivityTofu />
                  <ActivityBody>
                    <ActivityTitle>Login: {who}</ActivityTitle>
                    <ActivityMeta>
                      {who} · {when}
                    </ActivityMeta>
                  </ActivityBody>
                </ActivityItem>
              ))}
            </ActivityList>
          </ActivityPanel>
        </RightColumn>
      </Page>
    </>
  );
}
